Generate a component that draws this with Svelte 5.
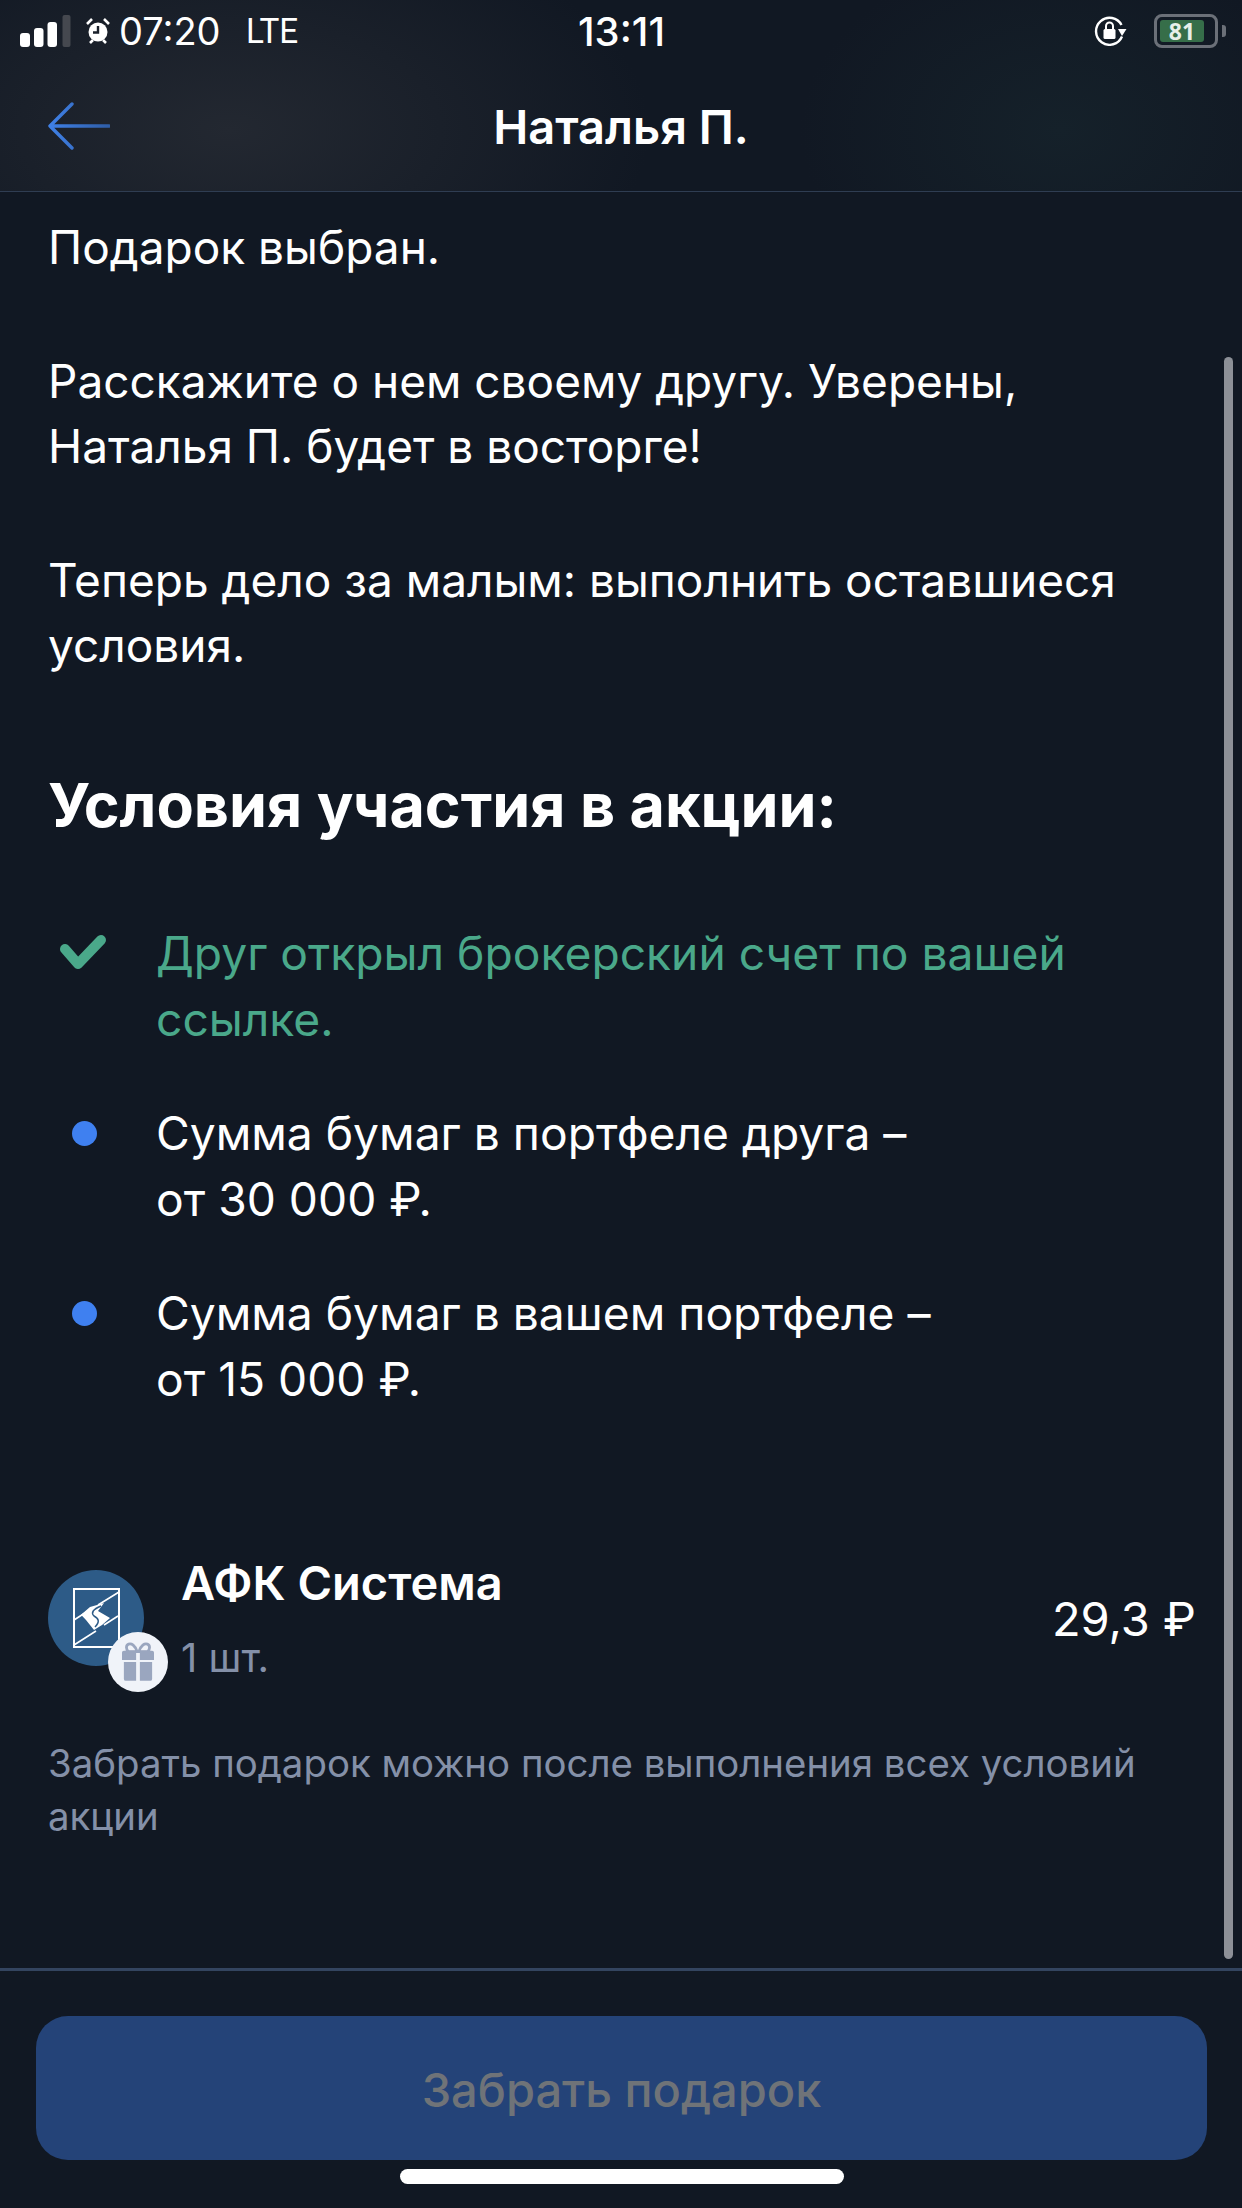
<script lang="ts">
  const conditions = [
    { lines: ["Сумма бумаг в портфеле друга –", "от 30 000 ₽."] },
    { lines: ["Сумма бумаг в вашем портфеле –", "от 15 000 ₽."] },
  ];
</script>

<div class="screen">
  <header class="top">
    <div class="status">
      <div class="status-left">
        <svg class="signal" width="52" height="32" viewBox="0 0 52 32" aria-hidden="true">
          <rect x="0" y="18" width="10" height="14" rx="3" fill="#fff" />
          <rect x="14" y="13" width="9.5" height="19" rx="3" fill="#fff" />
          <rect x="27.5" y="7" width="9.5" height="25" rx="3" fill="#fff" />
          <rect x="42.5" y="0" width="8" height="32" rx="2" fill="#45484f" />
        </svg>
        <svg class="alarm" width="24" height="28" viewBox="0 0 24 28" aria-hidden="true">
          <circle cx="12" cy="15" r="9.5" fill="#fff" />
          <path d="M12 9v6.5H7" fill="none" stroke="#1a202b" stroke-width="2.4" />
          <path d="M1 7l5-5M23 7l-5-5M4 26l3-3M20 26l-3-3" stroke="#fff" stroke-width="2.6" />
        </svg>
        <span class="clock">07:20</span>
        <span class="net">LTE</span>
      </div>
      <span class="time">13:11</span>
      <div class="status-right">
        <svg width="34" height="30" viewBox="0 0 34 30" aria-hidden="true">
          <path d="M28 20.5A13.5 13.5 0 1 1 27.5 9" fill="none" stroke="#fff" stroke-width="2.4" />
          <path d="M32.5 13l-4.5 7-4-7z" fill="#fff" />
          <rect x="9.5" y="13" width="12" height="10" rx="1.5" fill="#fff" />
          <path d="M12 13V10a3.5 3.5 0 0 1 7 0v3" fill="none" stroke="#fff" stroke-width="2" />
        </svg>
        <div class="battery">
          <div class="battery-fill">81</div>
        </div>
        <div class="battery-nub"></div>
      </div>
    </div>
    <div class="nav">
      <svg class="back" width="62" height="48" viewBox="0 0 62 48" aria-hidden="true">
        <path d="M24 2L2 24l22 22M2 24h59" fill="none" stroke="url(#arrow)" stroke-width="3.4" stroke-linecap="round" stroke-linejoin="round" />
        <defs>
          <linearGradient id="arrow" x1="0" x2="1" y1="0" y2="0">
            <stop offset="0" stop-color="#3f80e6" />
            <stop offset="1" stop-color="#2f5ea8" />
          </linearGradient>
        </defs>
      </svg>
      <h1 class="title">Наталья П.</h1>
    </div>
  </header>

  <main class="content">
    <p class="text">Подарок выбран.</p>
    <p class="text">Расскажите о нем своему другу. Уверены,<br />Наталья П. будет в восторге!</p>
    <p class="text">Теперь дело за малым: выполнить оставшиеся<br />условия.</p>

    <h2 class="heading">Условия участия в акции:</h2>

    <ul class="conditions">
      <li class="condition done">
        <span class="marker">
          <svg width="46" height="36" viewBox="0 0 46 36" aria-hidden="true">
            <path d="M5 15l13 15L41 6" fill="none" stroke="#4aa88a" stroke-width="10" stroke-linecap="round" stroke-linejoin="round" />
          </svg>
        </span>
        <span>Друг открыл брокерский счет по вашей<br />ссылке.</span>
      </li>
      {#each conditions as item}
        <li class="condition">
          <span class="marker"><span class="dot"></span></span>
          <span>{item.lines[0]}<br />{item.lines[1]}</span>
        </li>
      {/each}
    </ul>

    <div class="asset">
      <div class="avatar">
        <svg width="96" height="96" viewBox="0 0 96 96" aria-hidden="true">
          <circle cx="48" cy="48" r="48" fill="#2d5b87" />
          <rect x="26" y="19" width="45" height="58" fill="none" stroke="#fff" stroke-width="2" />
          <path d="M26 75L48 61M56 55L70 46M71 22L50 35M40 41L26 50" fill="none" stroke="#fff" stroke-width="1.6" />
          <path d="M33 44.7L42 37L56 33L50 41L62 48L54 55L46 60L38 50z" fill="#fff" />
          <path d="M53 36Q41 41 46 46Q54 50 47 57" fill="none" stroke="#2d5b87" stroke-width="1.5" />
        </svg>
        <div class="badge">
          <svg width="34" height="42" viewBox="0 0 34 42" aria-hidden="true">
            <path d="M16 10c-2-7-6-9-9-8-3 1-3 6 0 8zM18 10c2-7 6-9 9-8 3 1 3 6 0 8z" fill="none" stroke="#9aa6bf" stroke-width="3" />
            <path d="M2 9h13v10H0v-8a2 2 0 0 1 2-2zM19 9h13a2 2 0 0 1 2 2v8H19z" fill="#9aa6bf" />
            <path d="M2 21h13v20H4a2 2 0 0 1-2-2zM19 21h13v18a2 2 0 0 1-2 2H19z" fill="#9aa6bf" />
          </svg>
        </div>
      </div>
      <div class="asset-info">
        <div class="asset-name">АФК Система</div>
        <div class="asset-qty">1 шт.</div>
      </div>
      <div class="asset-price">29,3 ₽</div>
    </div>

    <p class="note">Забрать подарок можно после выполнения всех условий<br />акции</p>
  </main>

  <div class="scrollbar"></div>

  <footer class="bottom">
    <button class="cta" disabled>Забрать подарок</button>
    <div class="home"></div>
  </footer>
</div>

<style>
  :global(body) {
    margin: 0;
    background: #111823;
  }

  .screen {
    position: relative;
    width: 1242px;
    height: 2208px;
    display: flex;
    flex-direction: column;
    overflow: hidden;
    background: #111823;
    color: #fff;
    font-family: "Inter", sans-serif;
  }

  .top {
    height: 191px;
    flex-shrink: 0;
    border-bottom: 1px solid #2f3d52;
    background:
      radial-gradient(ellipse 420px 220px at 230px 130px, #232831 0%, rgba(35, 40, 49, 0) 100%),
      radial-gradient(ellipse 260px 180px at 1060px 130px, #15212a 0%, rgba(21, 33, 42, 0) 100%),
      #111823;
  }

  .status {
    height: 62px;
    display: grid;
    grid-template-columns: 1fr auto 1fr;
    align-items: center;
    padding: 0 16px 0 20px;
  }

  .status-left {
    display: flex;
    align-items: center;
  }

  .signal {
    margin-right: 14px;
  }

  .clock {
    margin-left: 9px;
    font: 400 38px "Inter", sans-serif;
  }

  .net {
    margin-left: 25px;
    font: 400 35px "Roboto", sans-serif;
    transform: scaleX(0.95);
    transform-origin: left;
  }

  .time {
    margin-left: -3px;
    font: 500 40px "Inter", sans-serif;
  }

  .status-right {
    display: flex;
    align-items: center;
    justify-content: flex-end;
  }

  .battery {
    margin-left: 26px;
    width: 64px;
    height: 34px;
    box-sizing: border-box;
    border: 3px solid #6b7078;
    border-radius: 8px;
    padding: 3px;
    padding-right: 11px;
  }

  .battery-fill {
    height: 100%;
    border-radius: 3px;
    background: #366e49;
    font: 700 23px/22px "Open Sans", sans-serif;
    text-align: center;
    color: #e6efe9;
  }

  .battery-nub {
    width: 4px;
    height: 12px;
    margin-left: 4px;
    border-radius: 0 3px 3px 0;
    background: #6b7078;
  }

  .nav {
    position: relative;
    height: 128px;
    display: flex;
    align-items: center;
    justify-content: center;
  }

  .back {
    position: absolute;
    left: 48px;
    top: 40px;
  }

  .title {
    margin: 0;
    font: 600 47px "Inter", sans-serif;
  }

  .content {
    flex: 1;
    padding: 23px 46px 0 48px;
  }

  .text {
    margin: 0 0 69px;
    font-size: 46px;
    line-height: 65px;
  }

  .heading {
    margin: 87px 0 0;
    font: 700 61px/80px "Inter", sans-serif;
  }

  .conditions {
    margin: 75px 0 0;
    padding: 0;
    list-style: none;
    display: flex;
    flex-direction: column;
    gap: 48px;
    font-size: 46.2px;
    line-height: 66px;
  }

  .condition {
    display: flex;
  }

  .done {
    color: #4aa88a;
  }

  .marker {
    width: 109px;
    height: 66px;
    flex-shrink: 0;
    display: flex;
    align-items: center;
    margin-right: -1px;
  }

  .marker svg {
    margin-left: 12px;
    margin-top: -2px;
  }

  .dot {
    width: 25px;
    height: 25px;
    margin-left: 24px;
    border-radius: 50%;
    background: #3f80f0;
  }

  .asset {
    margin: 141px 0 0 0;
    display: flex;
    align-items: center;
  }

  .avatar {
    position: relative;
    width: 96px;
    height: 96px;
    flex-shrink: 0;
    margin-right: 37px;
  }

  .badge {
    position: absolute;
    left: 60px;
    top: 62px;
    width: 60px;
    height: 60px;
    border-radius: 50%;
    background: #f0f3f9;
    display: flex;
    align-items: center;
    justify-content: center;
  }

  .badge svg {
    width: 32px;
    height: 40px;
  }

  .asset-info {
    flex: 1;
  }

  .asset-name {
    font: 600 47px/60px "Inter", sans-serif;
  }

  .asset-qty {
    margin-top: 20px;
    font: 400 40px/50px "Inter", sans-serif;
    color: #8490a8;
  }

  .asset-price {
    font: 400 47px "Inter", sans-serif;
  }

  .note {
    margin: 54px 0 0 0;
    font: 400 38.4px/53px "Inter", sans-serif;
    color: #8490a8;
  }

  .scrollbar {
    position: absolute;
    left: 1224px;
    top: 357px;
    width: 9px;
    height: 1602px;
    border-radius: 5px;
    background: #8d9097;
  }

  .bottom {
    height: 240px;
    flex-shrink: 0;
    box-sizing: border-box;
    border-top: 3px solid #33445f;
    padding: 45px 35px 0 36px;
    display: flex;
    flex-direction: column;
    align-items: center;
  }

  .cta {
    width: 100%;
    height: 144px;
    flex-shrink: 0;
    border: 0;
    border-radius: 32px;
    background: #244378;
    color: #6f7378;
    font: 500 47px "Inter", sans-serif;
    padding-top: 4px;
  }

  .home {
    width: 444px;
    height: 15px;
    margin-top: 9px;
    border-radius: 8px;
    background: #fff;
  }
</style>
